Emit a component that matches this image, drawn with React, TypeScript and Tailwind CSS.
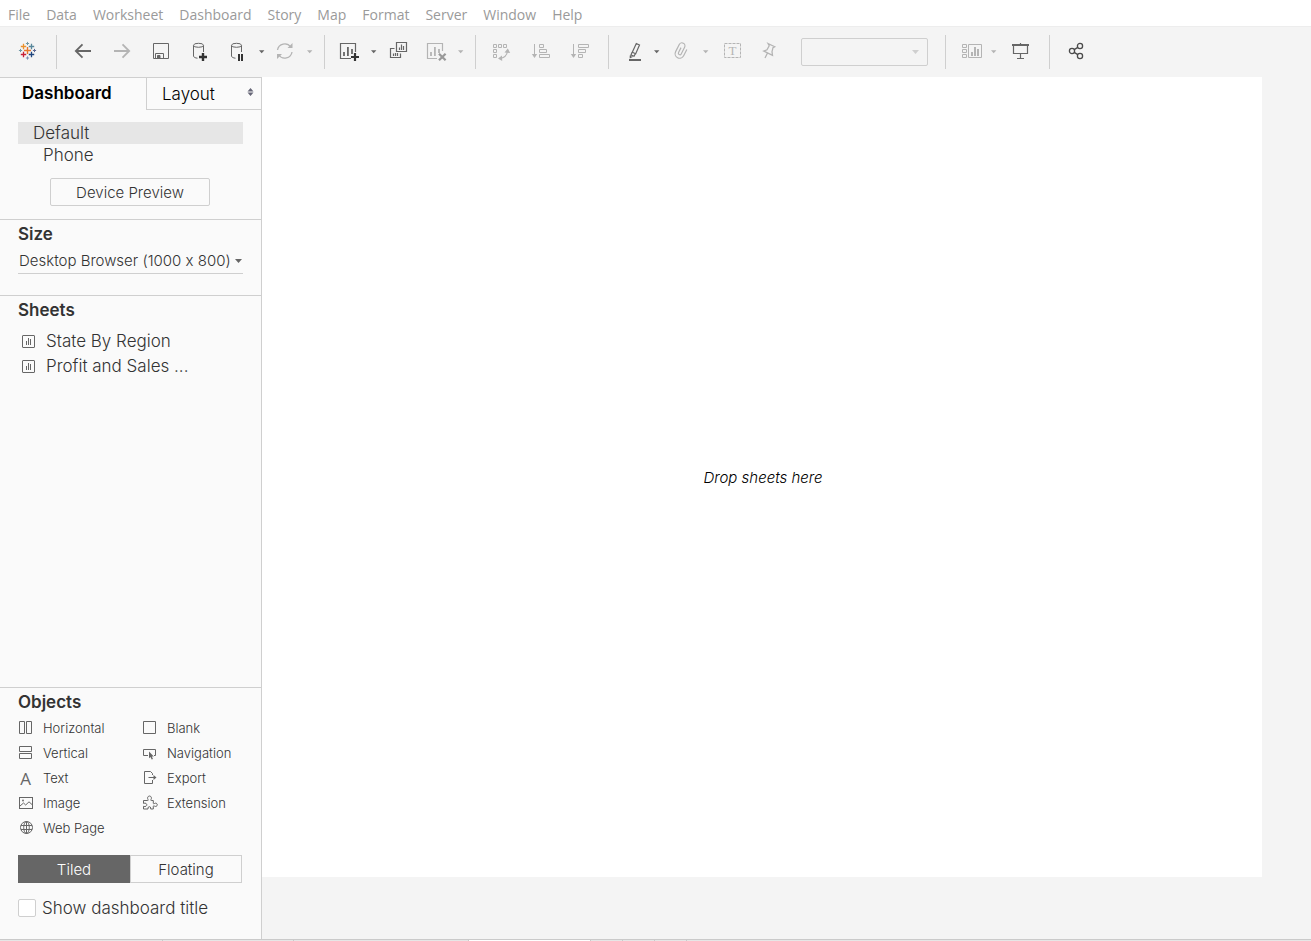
import React, { useState } from 'react';

const menuItems = ['File', 'Data', 'Worksheet', 'Dashboard', 'Story', 'Map', 'Format', 'Server', 'Window', 'Help'];

type ToolProps = {
    label: string;
    className?: string;
    children: React.ReactNode;
};

const Tool = ({ label, className = "", children }: ToolProps) => (
    <button type="button" aria-label={label} className={`shrink-0 ${className}`}>
        <svg width="24" height="24" viewBox="0 0 24 24" fill="none" stroke="currentColor" strokeWidth="1">
            {children}
        </svg>
    </button>
);

const Caret = ({ label, className = "" }: { label: string; className?: string }) => (
    <button type="button" aria-label={label} className={`shrink-0 ${className}`}>
        <svg width="8" height="24" viewBox="0 0 8 24" fill="currentColor">
            <path d="M1 11.2h5.4L3.7 14.2z" />
        </svg>
    </button>
);

const Separator = ({ className = "" }: { className?: string }) => (
    <div className={`mt-0.5 h-[34px] w-px shrink-0 bg-[#cfcfcf] ${className}`} />
);

const logoMarks = [
    { x: 12.5, y: 11.5, r: 3.5, w: 1.4, color: '#e8762c' },
    { x: 8.5, y: 7.5, r: 2.7, w: 1.3, color: '#eb912c' },
    { x: 16.5, y: 7.5, r: 2.7, w: 1.3, color: '#59879b' },
    { x: 8.5, y: 15.5, r: 2.7, w: 1.3, color: '#c72037' },
    { x: 16.5, y: 15.5, r: 2.7, w: 1.3, color: '#1f457e' },
    { x: 12.5, y: 4.5, r: 1.6, w: 1, color: '#7199a6' },
    { x: 12.5, y: 19, r: 1.6, w: 1, color: '#7b8fb5' },
    { x: 5.5, y: 11.5, r: 1.6, w: 1, color: '#7199a6' },
    { x: 19.5, y: 11.5, r: 1.6, w: 1, color: '#5b6591' },
];

const Toolbar = () => (
    <div role="toolbar" className="flex h-[51px] items-center overflow-hidden border-t border-[#ededed] bg-[#f4f4f4] pb-0.5 pl-[15px] text-[#666]">
        <Tool label="Start page">
            {logoMarks.map((m) => (
                <path key={`${m.x}-${m.y}`} d={`M${m.x - m.r} ${m.y}h${m.r * 2}M${m.x} ${m.y - m.r}v${m.r * 2}`} stroke={m.color} strokeWidth={m.w} />
            ))}
        </Tool>
        <Separator className="ml-[17px]" />
        <Tool label="Undo" className="ml-3.5">
            <path d="M20 12H5M11.5 5.3L4.8 12l6.7 6.7" strokeWidth="1.8" />
        </Tool>
        <Tool label="Redo" className="ml-[15px] text-[#b4b4b4]">
            <path d="M4 12h15M12.5 5.3l6.7 6.7-6.7 6.7" strokeWidth="1.8" />
        </Tool>
        <Tool label="Save" className="ml-[15px]">
            <path d="M4.5 4.5h15v15h-15zM6.5 19.5v-5h8v5" />
            <path d="M8.5 19v-2.5H11V19z" fill="currentColor" />
        </Tool>
        <Tool label="New data source" className="ml-[15px]">
            <ellipse cx="10.5" cy="6.3" rx="5" ry="2" />
            <path d="M5.5 6.5V17c0 1.2 1.8 2 4 2.2M15.5 6.5V13" />
            <path d="M15 14v8M11 18h8" stroke="#333" strokeWidth="2.4" />
        </Tool>
        <Tool label="Pause auto updates" className="ml-[15px]">
            <ellipse cx="9.5" cy="6.3" rx="5" ry="2" />
            <path d="M4.5 6.5V17c0 1.2 1.8 2 4 2.2M14.5 6.5V13" />
            <path d="M12 15v7M15 15v7" stroke="#333" strokeWidth="2" />
        </Tool>
        <Caret label="Auto update options" className="ml-[7px]" />
        <Tool label="Run update" className="ml-[7px] text-[#b4b4b4]">
            <path d="M4.5 11a7.3 7.3 0 0 1 13.2-3M19 13a7.3 7.3 0 0 1-13.2 3" strokeWidth="1.3" />
            <path d="M14.500 9h5V4zM9 15H4v5z" fill="currentColor" stroke="none" />
        </Tool>
        <Caret label="Update options" className="ml-[9px] text-[#b4b4b4]" />
        <Separator className="ml-2.5" />
        <Tool label="New worksheet" className="ml-3">
            <path d="M18.5 13V4.5h-15v15H14" strokeWidth="1.2" />
            <path d="M7 13v4M10.9 8v9M15 10v5" strokeWidth="1.8" />
            <path d="M18 14v8M14 18h8" stroke="#333" strokeWidth="2.2" />
        </Tool>
        <Caret label="New sheet options" className="ml-[9px]" />
        <Tool label="Duplicate" className="ml-2">
            <path d="M10.5 3.5h10v9h-10zM8.5 9.5h-4v9h10v-4" strokeWidth="1.2" />
            <path d="M13.5 8.5V11M15.5 5.5V11M17.5 7v4M7.5 14.5V17M9.5 14v3M11.5 14v3" strokeWidth="1.2" />
        </Tool>
        <Tool label="Clear sheet" className="ml-3.5 text-[#b4b4b4]">
            <path d="M18.5 12V4.5h-15v15H13" strokeWidth="1.2" />
            <path d="M7 13v4M10.9 8v9M15 10v4" strokeWidth="1.8" />
            <path d="M15 14.7l6.6 6.6M21.6 14.7L15 21.3" stroke="#999" strokeWidth="2.2" />
        </Tool>
        <Caret label="Clear options" className="ml-[9px] text-[#b4b4b4]" />
        <Separator className="ml-2.5" />
        <Tool label="Swap rows and columns" className="ml-[13px] text-[#b4b4b4]">
            <path d="M4.5 5.5h3v3h-3zM9.5 5.5h3v3h-3zM14.5 5.5h3v3h-3zM4.5 10.5h3v3h-3zM4.5 15.5h3v3h-3z" />
            <path d="M18.500 12c-.5 4.500-3.500 7-8 7.500" strokeWidth="1.2" />
            <path d="M15.500 13.500l3.300-4 2.400 4.500zM13 16.500l-4 3 4.200 2.500z" fill="currentColor" stroke="none" />
        </Tool>
        <Tool label="Sort ascending" className="ml-4 text-[#b4b4b4]">
            <path d="M5.5 5v12" />
            <path d="M2.8 15h5.4L5.500 19z" fill="currentColor" stroke="none" />
            <path d="M10.5 5.5h4v3h-4zM10.5 10.5h7v3h-7zM10.5 15.5h10v3h-10z" />
        </Tool>
        <Tool label="Sort descending" className="ml-[15px] text-[#b4b4b4]">
            <path d="M5.5 5v12" />
            <path d="M2.8 15h5.4L5.5 19z" fill="currentColor" stroke="none" />
            <path d="M10.5 5.5h10v3h-10zM10.5 10.5h7v3h-7zM10.5 15.5h4v3h-4z" />
        </Tool>
        <Separator className="ml-4" />
        <Tool label="Highlight" className="ml-3.5">
            <path d="M13.3 4.5l3.2 1.5-3.8 8.8-3.4-1.5zM9 13.500l-1 2.500 3 1.300 1.200-2.300M7.300 16.500v2l2.200-1" strokeWidth="1.2" />
            <path d="M6 21h12" strokeWidth="2" />
        </Tool>
        <Caret label="Highlight options" className="ml-1.5" />
        <Tool label="Group members" className="ml-2 text-[#b4b4b4]">
            <path
                d="M10.500 9v5.500a1.500 1.500 0 0 0 3 0V7a3 3 0 0 0-6 0v8a4.500 4.500 0 0 0 9 0V8"
                transform="rotate(27 12 12)"
                strokeWidth="1.2"
            />
        </Tool>
        <Caret label="Group options" className="ml-[9px] text-[#b4b4b4]" />
        <Tool label="Show mark labels" className="ml-[11px] text-[#b4b4b4]">
            <rect x="3.5" y="4.5" width="16" height="14" strokeDasharray="3 1" />
            <text x="11.5" y="16" textAnchor="middle" fontSize="13" fill="currentColor" stroke="none" className="font-['Liberation_Serif',serif]">T</text>
        </Tool>
        <Tool label="Pin axes" className="ml-3 text-[#b4b4b4]">
            <path d="M11 4.500l6.700 3.200-1.700 1-1 4 .5 3.600-8.700-4.200 3.200-1.300 2.200-4zM10.500 14L8 19" strokeWidth="1.3" />
        </Tool>
        <div className="relative ml-5 w-[127px] shrink-0 text-[#cfcfcf]">
            <select aria-label="Fit" className="mt-0.5 block h-7 w-full appearance-none rounded-xs border border-[#cfcfcf] bg-transparent" />
            <svg width="8" height="6" viewBox="0 0 8 6" fill="currentColor" className="pointer-events-none absolute top-3.5 right-2">
                <path d="M0 0h7L3.5 4z" />
            </svg>
        </div>
        <Separator className="ml-[17px]" />
        <Tool label="Show or hide cards" className="ml-3.5 text-[#b4b4b4]">
            <path d="M2.5 5.5h4v3h-4zM2.5 10.5h4v3h-4zM2.5 15.5h4v3h-4zM8.5 5.5h13v13h-13z" />
            <path d="M12 13v4M15 8v9M18 10v7" strokeWidth="2" />
        </Tool>
        <Caret label="Card options" className="ml-1.5 text-[#b4b4b4]" />
        <Tool label="Presentation mode" className="ml-[11px]">
            <path d="M3 6h17" strokeWidth="2" />
            <path d="M11.5 4v2M4.5 6v8.5h14V6M11.5 14.5v5M8 19.5h7" strokeWidth="1.2" />
        </Tool>
        <Separator className="ml-4" />
        <Tool label="Share" className="ml-[15px] text-[#4a4a4a]">
            <g strokeWidth="1.3">
                <circle cx="15" cy="7" r="2.6" />
                <circle cx="7" cy="12" r="2.6" />
                <circle cx="15" cy="17" r="2.6" />
                <path d="M9.2 10.6l3.6-2.2M9.2 13.4l3.6 2.2" />
            </g>
        </Tool>
    </div>
);

const SheetIcon = () => (
    <svg width="13" height="13" viewBox="0 0 13 13" fill="none" stroke="#666" aria-hidden="true">
        <rect x="0.5" y="0.5" width="12" height="12" rx="0.5" />
        <path d="M4.5 6v4M6.5 3v7M8.5 4v6" />
    </svg>
);

const ObjectIcon = ({ children }: { children: React.ReactNode }) => (
    <svg width="16" height="17" viewBox="0 0 16 17" fill="none" stroke="#666" aria-hidden="true">
        {children}
    </svg>
);

const objectColumns = [
    [
        { name: 'Horizontal', icon: <ObjectIcon><path d="M1.5 1.5h5v12h-5zM8.5 1.5h5v12h-5z" /></ObjectIcon> },
        { name: 'Vertical', icon: <ObjectIcon><path d="M1.5 1.5h12v5h-12zM1.5 8.5h12v5h-12z" /></ObjectIcon> },
        { name: 'Text', icon: <span aria-hidden="true" className="w-[15px] mr-px text-center font-['Open_Sans',sans-serif] text-[17px] font-normal text-[#666]">A</span> },
        {
            name: 'Image',
            icon: (
                <ObjectIcon>
                    <rect x="1.5" y="2.5" width="13" height="11" />
                    <path d="M2 11l3.5-3 2.200 2L11 6.800l3.500 3.200" />
                    <circle cx="5" cy="5.5" r="0.9" fill="#666" stroke="none" />
                </ObjectIcon>
            ),
        },
        {
            name: 'Web Page',
            icon: (
                <ObjectIcon>
                    <circle cx="8.5" cy="7.5" r="6" />
                    <ellipse cx="8.5" cy="7.5" rx="2.8" ry="6" />
                    <path d="M3 5.5h11M3 9.5h11M8.5 1.500v12" />
                </ObjectIcon>
            ),
        },
    ],
    [
        { name: 'Blank', icon: <ObjectIcon><path d="M1.5 1.5h12v12h-12z" /></ObjectIcon> },
        {
            name: 'Navigation',
            icon: (
                <ObjectIcon>
                    <path d="M6 10.5H1.5v-6h12v6H12" />
                    <path d="M7 6.5v6.800L8.500 12l1.200 2.500 1.300-.6-1.200-2.400h2z" fill="#666" stroke="none" />
                </ObjectIcon>
            ),
        },
        {
            name: 'Export',
            icon: (
                <ObjectIcon>
                    <path d="M10.5 5V3.500l-2-2h-6v12h8V10M6.500 7.500H13" />
                    <path d="M11.5 5l3 2.500-3 2.500z" fill="#666" stroke="none" />
                </ObjectIcon>
            ),
        },
        {
            name: 'Extension',
            icon: (
                <ObjectIcon>
                    <path d="M1.500 5.500h4.200c.7 0 .7-.5.300-1-1-1.500-.2-3.500 1.500-3.500s2.500 2 1.500 3.500c-.4.500-.4 1 .3 1h2v2.700c0 .6.500.8 1 .4 1.300-1 3-.2 3 1.200s-1.700 2.200-3 1.200c-.5-.4-1-.2-1 .4v2.600H8.700v-1c0-1.800-2.700-1.800-2.700 0v1H1.500v-2.700c2.200.8 3.300-.4 3.300-1.500s-1.100-2.200-3.300-1.400z" />
                </ObjectIcon>
            ),
        },
    ],
];

const Sidebar = () => {
    const [layout, setLayout] = useState('Tiled');
    const [showTitle, setShowTitle] = useState(false);

    return (
        <aside className="flex w-[262px] shrink-0 flex-col border-t border-r border-[#cfcfcf] bg-[#fafafa] text-[#333]">
            <div className="flex h-8">
                <button type="button" className="flex-1 pb-0.5 pl-[22px] text-left text-[17px] leading-[30px] font-semibold text-black">Dashboard</button>
                <button type="button" className="flex w-[115px] items-center justify-between border-b border-l border-[#cfcfcf] pr-[7px] pl-[15px] text-[17px] font-light text-black">
                    <span className="pt-0.5">Layout</span>
                    <svg width="7" height="9" viewBox="0 0 7 9" fill="#667" aria-hidden="true" className="mb-0.5">
                        <path d="M3.5 0l3 3.500h-6zM3.5 8l3-3.500h-6z" />
                    </svg>
                </button>
            </div>

            <div className="border-b border-[#cfcfcf] px-[18px] pt-3 pb-[13px] text-[17px] leading-[22px] font-light">
                <button type="button" className="block w-full bg-[#e6e6e6] pl-[15px] text-left">Default</button>
                <button type="button" className="block w-full pl-[25px] text-left">Phone</button>
                <button type="button" className="mt-3 ml-8 block h-7 w-40 rounded-xs border border-[#cfcfcf] pt-0.5 text-[15px]">Device Preview</button>
            </div>

            <section className="border-b border-[#cfcfcf] px-[18px] pt-[3px] pb-[21px]">
                <h2 className="text-[17px] leading-[22px] font-semibold">Size</h2>
                <div className="relative mt-[5px]">
                    <select
                        aria-label="Size"
                        className="block h-6 w-full appearance-none border-b border-[#cfcfcf] bg-transparent pb-0.5 pl-px text-[15px] leading-[21px] font-light [font-feature-settings:'calt'_0]"
                    >
                        <option>Desktop Browser (1000 x 800)</option>
                    </select>
                    <svg width="7" height="4" viewBox="0 0 7 4" fill="#666" className="pointer-events-none absolute top-[9px] right-px">
                        <path d="M0 0h7L3.5 4z" />
                    </svg>
                </div>
            </section>

            <section className="flex-1 border-b border-[#cfcfcf] px-[18px] pt-[3px]">
                <h2 className="text-[17px] leading-[22px] font-semibold">Sheets</h2>
                <ul className="mt-2 text-[17px] leading-[25px] font-light">
                    <li className="flex items-center gap-[11px] pl-1"><SheetIcon />State By Region</li>
                    <li className="flex items-center gap-[11px] pl-1"><SheetIcon />Profit and Sales ...</li>
                </ul>
            </section>

            <section className="px-[18px] pt-[3px] pb-5">
                <h2 className="text-[17px] leading-[22px] font-semibold">Objects</h2>
                <div className="mt-[3px] flex text-[13px] leading-[25px] font-light">
                    {objectColumns.map((column, i) => (
                        <ul key={i} className="w-[124px] shrink-0">
                            {column.map((item) => (
                                <li key={item.name} className="flex h-[25px] items-center gap-[9px]">
                                    {item.icon}
                                    {item.name}
                                </li>
                            ))}
                        </ul>
                    ))}
                </div>
                <div className="mt-3.5 flex h-7 w-56 text-[15px] font-light">
                    {['Tiled', 'Floating'].map((name) => (
                        <button
                            key={name}
                            type="button"
                            onClick={() => setLayout(name)}
                            className={`flex-1 border pt-0.5 ${layout === name ? 'border-[#666] bg-[#666] text-white' : 'border-[#cfcfcf]'}`}
                        >
                            {name}
                        </button>
                    ))}
                </div>
                <label className="mt-3.5 flex items-center gap-1.5 text-[17px] leading-[22px] font-light">
                    <input
                        type="checkbox"
                        checked={showTitle}
                        onChange={(e) => setShowTitle(e.target.checked)}
                        className="size-[18px] appearance-none rounded-xs border border-[#cfcfcf] bg-white checked:bg-[#666]"
                    />
                    Show dashboard title
                </label>
            </section>
        </aside>
    );
};

const DashboardView = () => {
    return (
        <div className="flex min-h-screen flex-col bg-[#f4f4f4] font-['Inter',sans-serif]">
            <nav className="flex h-[26px] items-center gap-4 bg-white px-2 pt-1 font-['Open_Sans',sans-serif] text-[14px] leading-[22px] text-[#9a9a9a]">
                {menuItems.map((item) => (
                    <button key={item} type="button">{item}</button>
                ))}
            </nav>
            <Toolbar />
            <div className="flex flex-1">
                <Sidebar />
                <main className="flex flex-1 pr-[49px] pb-[62px]">
                    <div className="flex flex-1 items-center justify-center bg-white pt-0.5 pl-0.5">
                        <p className="text-[15px] font-light text-black italic">Drop sheets here</p>
                    </div>
                </main>
            </div>
            <div className="flex h-0.5 border-t border-[#cacaca] bg-[#e6e6e6]">
                <div className="w-[163px] border-r border-[#cacaca]" />
                <div className="w-[131px] border-r border-[#cacaca]" />
                <div className="w-[175px] border-r border-[#cacaca]" />
                <div className="w-[122px] border-r border-[#cacaca] bg-white" />
                <div className="w-8 border-r border-[#cacaca]" />
                <div className="w-8 border-r border-[#cacaca]" />
                <div className="w-8 border-r border-[#cacaca]" />
            </div>
        </div>
    );
};

export default DashboardView;
